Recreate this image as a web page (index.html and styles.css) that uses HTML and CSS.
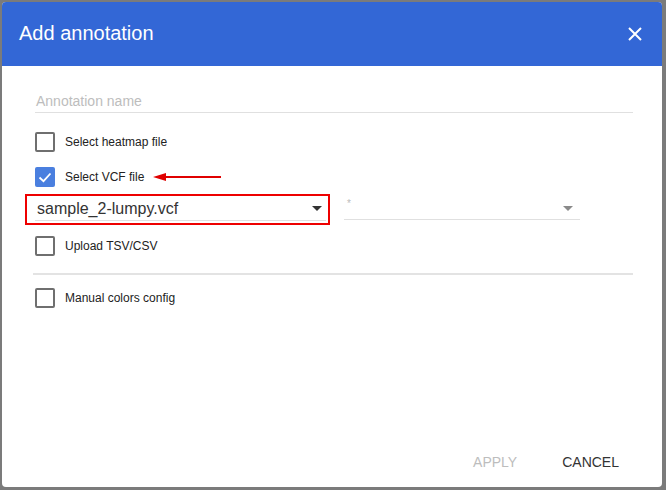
FILE: index.html
```html
<!DOCTYPE html>
<html>
<head>
<meta charset="utf-8">
<link rel="stylesheet" href="styles.css">
</head>
<body>
<div class="dialog">
  <div class="header">
    <span class="title">Add annotation</span>
    <svg class="close" width="14" height="14" viewBox="0 0 14 14"><path d="M1 1L13 13M13 1L1 13" stroke="#fff" stroke-width="2" fill="none"/></svg>
  </div>
  <div class="content">
    <div class="field"><span class="placeholder">Annotation name</span></div>
    <div class="row r1"><span class="box"></span><span class="label">Select heatmap file</span></div>
    <div class="row r2">
      <span class="box checked"><svg width="20" height="20" viewBox="0 0 20 20"><path d="M4.5 10.5L8.5 14.2L15.5 6.5" stroke="#fff" stroke-width="1.8" fill="none"/></svg></span>
      <span class="label">Select VCF file</span>
      <svg class="arrow" width="70" height="10" viewBox="0 0 70 10"><path d="M0 5L13 1V9Z" fill="#e00000"/><path d="M12 5H68" stroke="#e00000" stroke-width="2"/></svg>
    </div>
    <div class="selects">
      <div class="highlight">
        <div class="select main"><span class="value">sample_2-lumpy.vcf</span><span class="tri dark"></span></div>
      </div>
      <div class="select second"><span class="star">*</span><span class="tri light"></span></div>
    </div>
    <div class="row r3"><span class="box"></span><span class="label">Upload TSV/CSV</span></div>
    <div class="divider"></div>
    <div class="row r4"><span class="box"></span><span class="label">Manual colors config</span></div>
  </div>
  <div class="actions">
    <span class="btn disabled">APPLY</span>
    <span class="btn">CANCEL</span>
  </div>
</div>
</body>
</html>
```
FILE: styles.css
```css
html, body { margin: 0; padding: 0; }
body {
  width: 666px; height: 490px; overflow: hidden;
  background: #7b7b7b;
  font-family: "Liberation Sans", Arial, sans-serif;
  padding: 2px 0 0 2px; box-sizing: border-box;
}
.dialog {
  width: 660px; height: 485px;
  background: #fff;
  border-radius: 4px;
  overflow: hidden;
  display: flex; flex-direction: column;
  position: relative;
}
.header {
  height: 64px; flex: none;
  background: #3367d6;
  display: flex; align-items: center; justify-content: space-between;
  padding: 0 20px 0 17px;
}
.title { color: #fff; font-size: 20px; margin-top: -1px; }
.close { margin-top: 0px; }
.content { padding: 0 29px 0 31px; flex: 1; display: flex; flex-direction: column; }
.field {
  margin-top: 24px; margin-left: 2px; height: 22px;
  border-bottom: 1px solid #e0e0e0;
  display: flex; align-items: center;
}
.placeholder { color: #bdbdbd; font-size: 14px; margin-left: 1px; }
.row { display: flex; align-items: center; height: 20px; margin-left: 2px; }
.r1 { margin-top: 19px; }
.r2 { margin-top: 15px; }
.box {
  width: 20px; height: 20px; box-sizing: border-box;
  border: 2px solid #6f6f6f; border-radius: 2px; flex: none;
}
.box.checked { background: #4a7fdf; border: none; }
.box.checked svg { display: block; }
.label { font-size: 12px; color: #222; margin-left: 10px; }
.arrow { margin-left: 9px; }
.selects { display: flex; align-items: flex-start; margin-top: 7px; }
.highlight {
  margin-left: -8px;
  width: 305px; height: 31px; box-sizing: border-box;
  border: 2px solid #ee0000;
  padding: 0 2px 0 8px;
}
.select { display: flex; align-items: center; justify-content: space-between; border-bottom: 1px solid #e0e0e0; position: relative; }
.select.main { height: 24px; }
.value { font-size: 16px; color: #333; margin-left: 2px; margin-top: 2px; }
.tri { width: 0; height: 0; border-left: 5px solid transparent; border-right: 5px solid transparent; }
.tri.dark { border-top: 5px solid #333; margin-right: 4px; margin-top: 1px; }
.tri.light { border-top: 5px solid #8a8a8a; margin-right: 7px; margin-top: 2px; }
.select.second { width: 236px; margin-left: 14px; height: 24px; margin-top: 1px; }
.star { font-size: 10px; color: #bbb; align-self: flex-start; margin-left: 3px; margin-top: 3px; }
.r3 { margin-top: 11px; }
.divider { height: 2px; background: #e3e3e3; margin-top: 17px; }
.r4 { margin-top: 13px; }
.actions {
  flex: none; height: 50px;
  display: flex; justify-content: flex-end; align-items: center;
  padding-right: 43px;
}
.btn { font-size: 14px; color: #333; }
.btn.disabled { color: #bdbdbd; margin-right: 45px; }
```
